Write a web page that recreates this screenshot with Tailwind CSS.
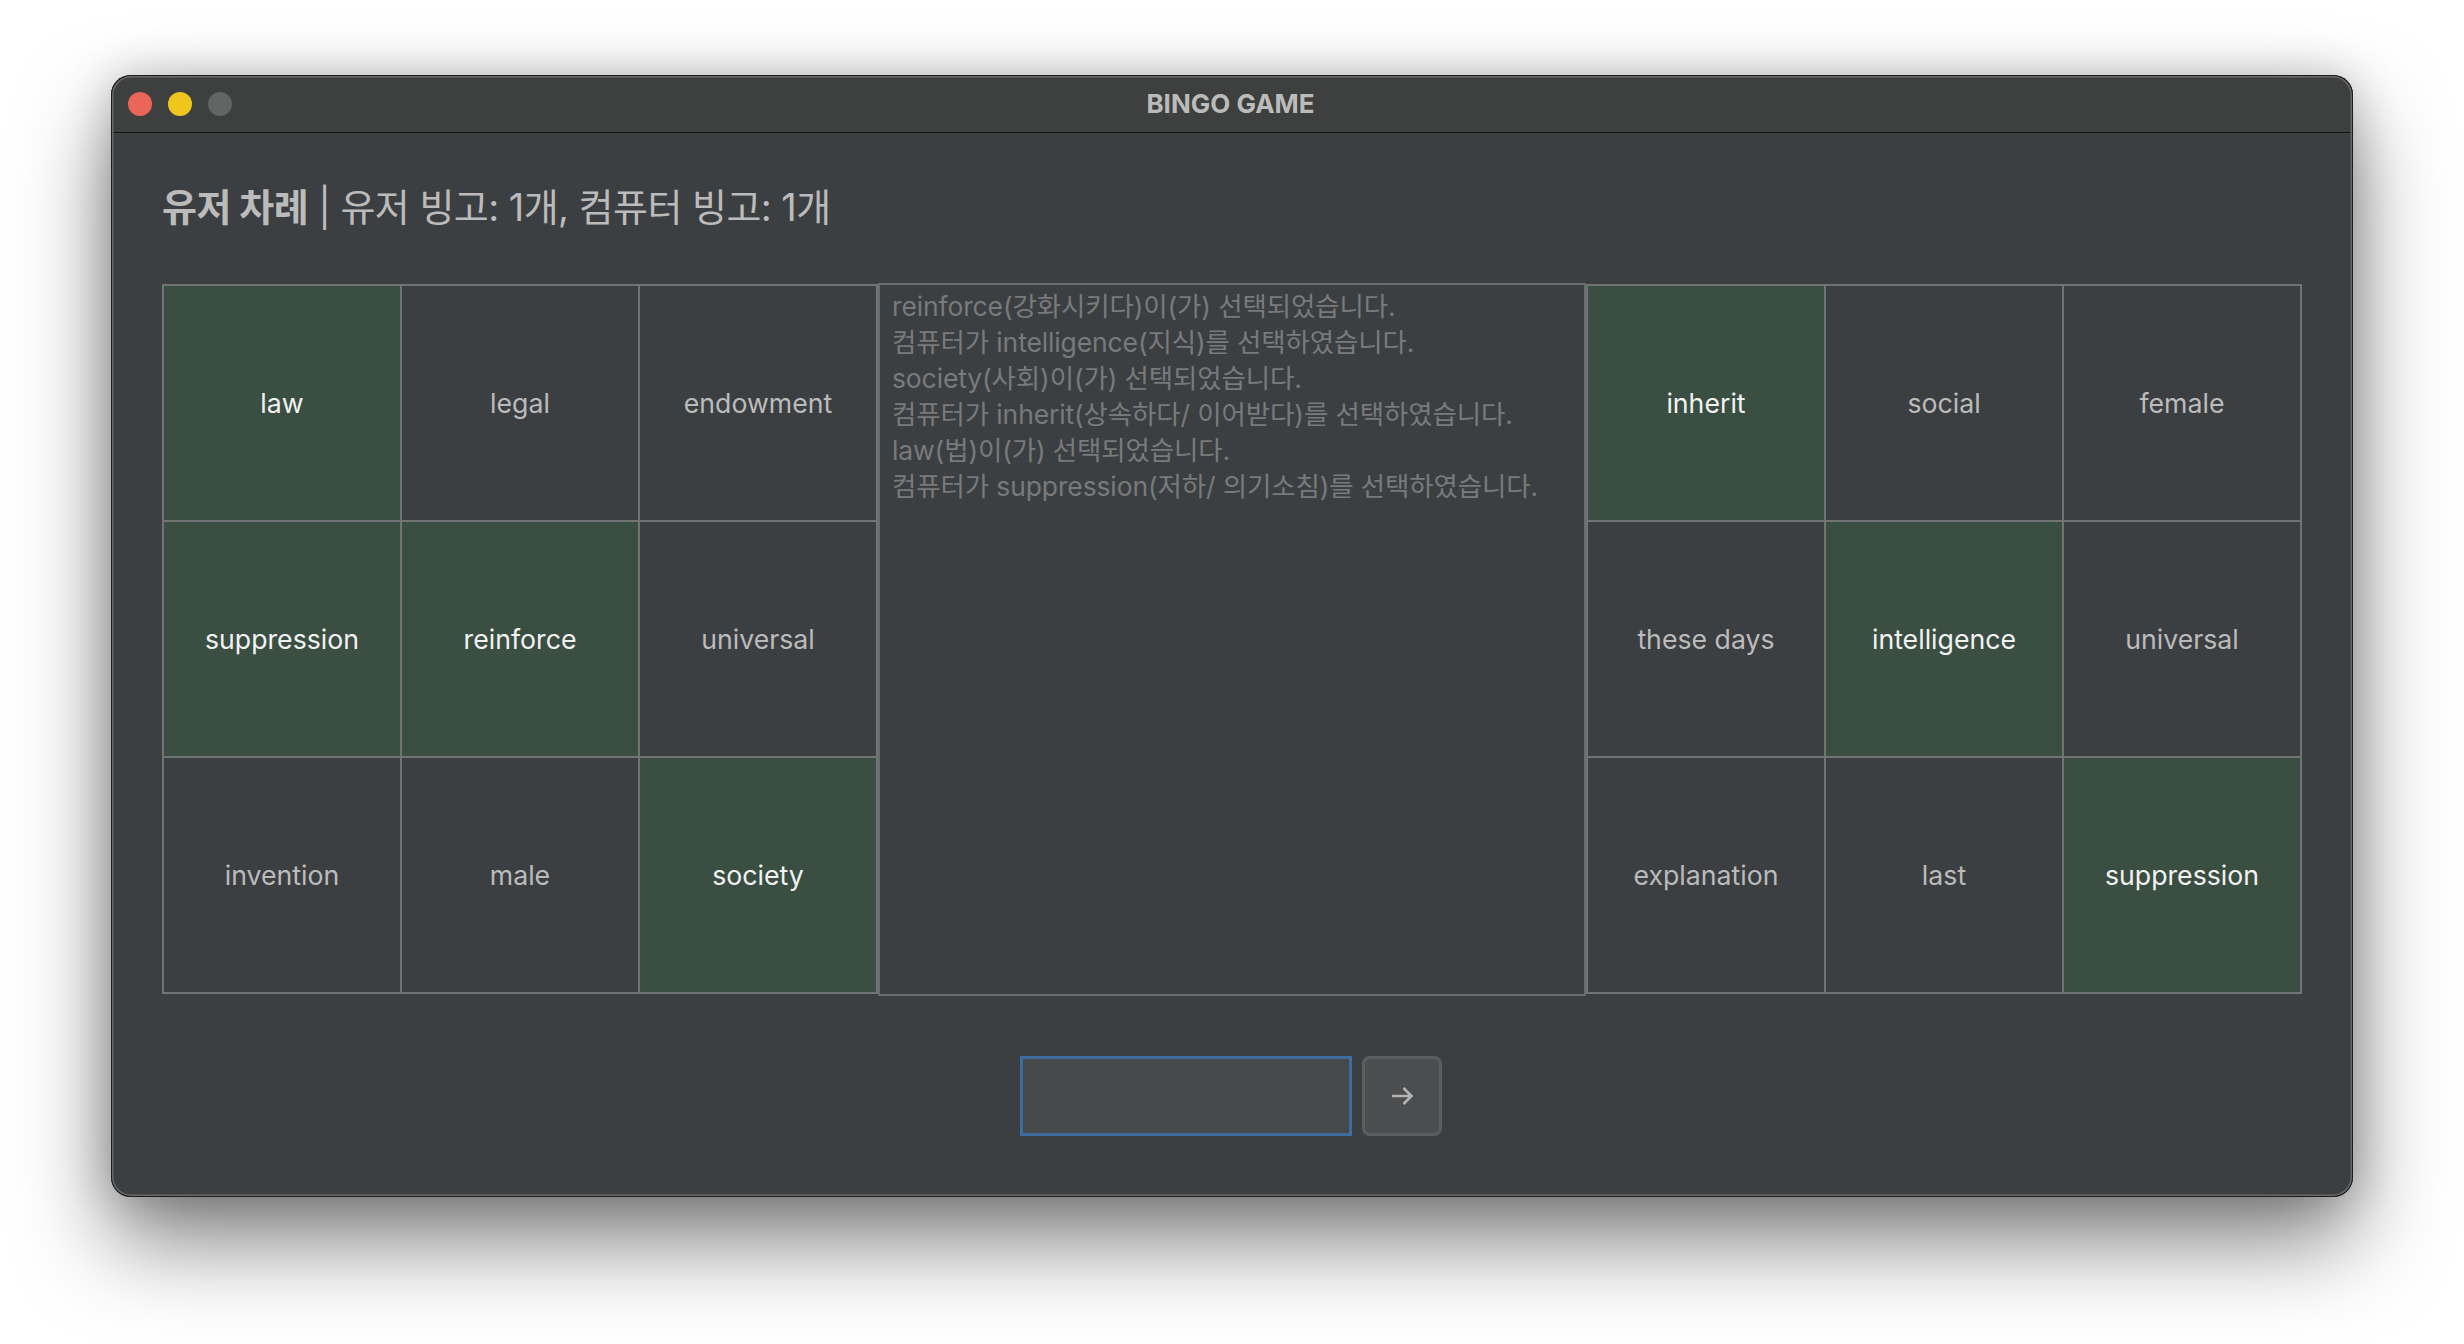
<!DOCTYPE html>
<html lang="ko" class="overflow-hidden">
<head>
    <meta charset="UTF-8">
    <title>BINGO GAME</title>
    <script src="https://cdn.jsdelivr.net/npm/@tailwindcss/browser@4"></script>
</head>
<body class="bg-white h-[1344px] overflow-hidden font-['Inter','Noto_Sans_CJK_KR',sans-serif] antialiased">
    <div class="flex justify-center pt-[75px]">
        <!-- Window -->
        <div class="relative w-[2242px] h-[1122px] rounded-[20px] bg-[#3c3f41] shadow-[0_44px_90px_rgba(0,0,0,0.5),0_0_46px_rgba(0,0,0,0.2)]">

            <!-- Title bar -->
            <div class="relative flex items-center h-[58px] rounded-t-[20px] bg-[#3e3f3f] border-b border-[#111111]">
                <div class="flex items-center gap-4 pl-[17px]">
                    <span class="w-6 h-6 rounded-full bg-[#ec6559]"></span>
                    <span class="w-6 h-6 rounded-full bg-[#f0c61e]"></span>
                    <span class="w-6 h-6 rounded-full bg-[#636565]"></span>
                </div>
                <div class="absolute inset-0 flex items-center justify-center pr-[3px] text-[26px] font-bold text-[#bbbbbb]">BINGO GAME</div>
            </div>

            <!-- Status -->
            <h1 class="pl-[51px] pt-[48px] h-[150px] text-[38px] leading-[52px] text-[#bbbbbb] tracking-[-0.55px]"><b class="font-bold">유저 차례</b> | 유저 빙고: 1개, 컴퓨터 빙고: 1개</h1>

            <!-- Boards and log -->
            <div class="flex items-start pl-[51px]">
                <div class="mt-px grid grid-cols-[repeat(3,238px)] grid-rows-[repeat(3,236px)] w-[716px] border-t-2 border-l-2 border-[#727373] text-[26.7px] text-[#bbbbbb]">
                    <div class="flex items-center justify-center border-r-2 border-b-2 border-[#727373] bg-[#3a4e42] text-[#f2f2f2]">law</div>
                    <div class="flex items-center justify-center border-r-2 border-b-2 border-[#727373]">legal</div>
                    <div class="flex items-center justify-center border-r-2 border-b-2 border-[#727373]">endowment</div>
                    <div class="flex items-center justify-center border-r-2 border-b-2 border-[#727373] bg-[#3a4e42] text-[#f2f2f2]">suppression</div>
                    <div class="flex items-center justify-center border-r-2 border-b-2 border-[#727373] bg-[#3a4e42] text-[#f2f2f2]">reinforce</div>
                    <div class="flex items-center justify-center border-r-2 border-b-2 border-[#727373]">universal</div>
                    <div class="flex items-center justify-center border-r-2 border-b-2 border-[#727373]">invention</div>
                    <div class="flex items-center justify-center border-r-2 border-b-2 border-[#727373]">male</div>
                    <div class="flex items-center justify-center border-r-2 border-b-2 border-[#727373] bg-[#3a4e42] text-[#f2f2f2]">society</div>
                </div>

                <div class="w-[708px] h-[713px] border-2 border-[#6a6c6d] pl-3 pt-[3px] text-[26.5px] leading-9 text-[#787a7b] tracking-[-0.13px]">
                    <p>reinforce(강화시키다)이(가) 선택되었습니다.</p>
                    <p>컴퓨터가 intelligence(지식)를 선택하였습니다.</p>
                    <p>society(사회)이(가) 선택되었습니다.</p>
                    <p>컴퓨터가 inherit(상속하다/ 이어받다)를 선택하였습니다.</p>
                    <p>law(법)이(가) 선택되었습니다.</p>
                    <p>컴퓨터가 suppression(저하/ 의기소침)를 선택하였습니다.</p>
                </div>

                <div class="mt-px grid grid-cols-[repeat(3,238px)] grid-rows-[repeat(3,236px)] w-[716px] border-t-2 border-l-2 border-[#727373] text-[26.7px] text-[#bbbbbb]">
                    <div class="flex items-center justify-center border-r-2 border-b-2 border-[#727373] bg-[#3a4e42] text-[#f2f2f2]">inherit</div>
                    <div class="flex items-center justify-center border-r-2 border-b-2 border-[#727373]">social</div>
                    <div class="flex items-center justify-center border-r-2 border-b-2 border-[#727373]">female</div>
                    <div class="flex items-center justify-center border-r-2 border-b-2 border-[#727373]">these days</div>
                    <div class="flex items-center justify-center border-r-2 border-b-2 border-[#727373] bg-[#3a4e42] text-[#f2f2f2]">intelligence</div>
                    <div class="flex items-center justify-center border-r-2 border-b-2 border-[#727373]">universal</div>
                    <div class="flex items-center justify-center border-r-2 border-b-2 border-[#727373]">explanation</div>
                    <div class="flex items-center justify-center border-r-2 border-b-2 border-[#727373]">last</div>
                    <div class="flex items-center justify-center border-r-2 border-b-2 border-[#727373] bg-[#3a4e42] text-[#f2f2f2]">suppression</div>
                </div>
            </div>

            <!-- Input row -->
            <div class="flex justify-center gap-[10px] mt-[60px] pr-[2px]">
                <input type="text" class="w-[332px] h-20 bg-[#45494a] border-[3px] border-[#3d6d9f] outline-none">
                <button class="flex items-center justify-center w-20 h-20 rounded-lg bg-[#4c4d4e] border-[3px] border-[#5c5e5f]">
                    <svg width="24" height="20" viewBox="0 0 24 20" fill="none" stroke="#b4b4b4" stroke-width="2.6"><path d="M2 10H21M13.5 2l8 8-8 8"/></svg>
                </button>
            </div>

            <!-- Window edge highlight -->
            <div class="absolute inset-0 rounded-[20px] pointer-events-none shadow-[inset_0_0_0_1px_#1c1c1c,inset_0_0_0_2.5px_#68696a]"></div>
        </div>
    </div>
</body>
</html>
